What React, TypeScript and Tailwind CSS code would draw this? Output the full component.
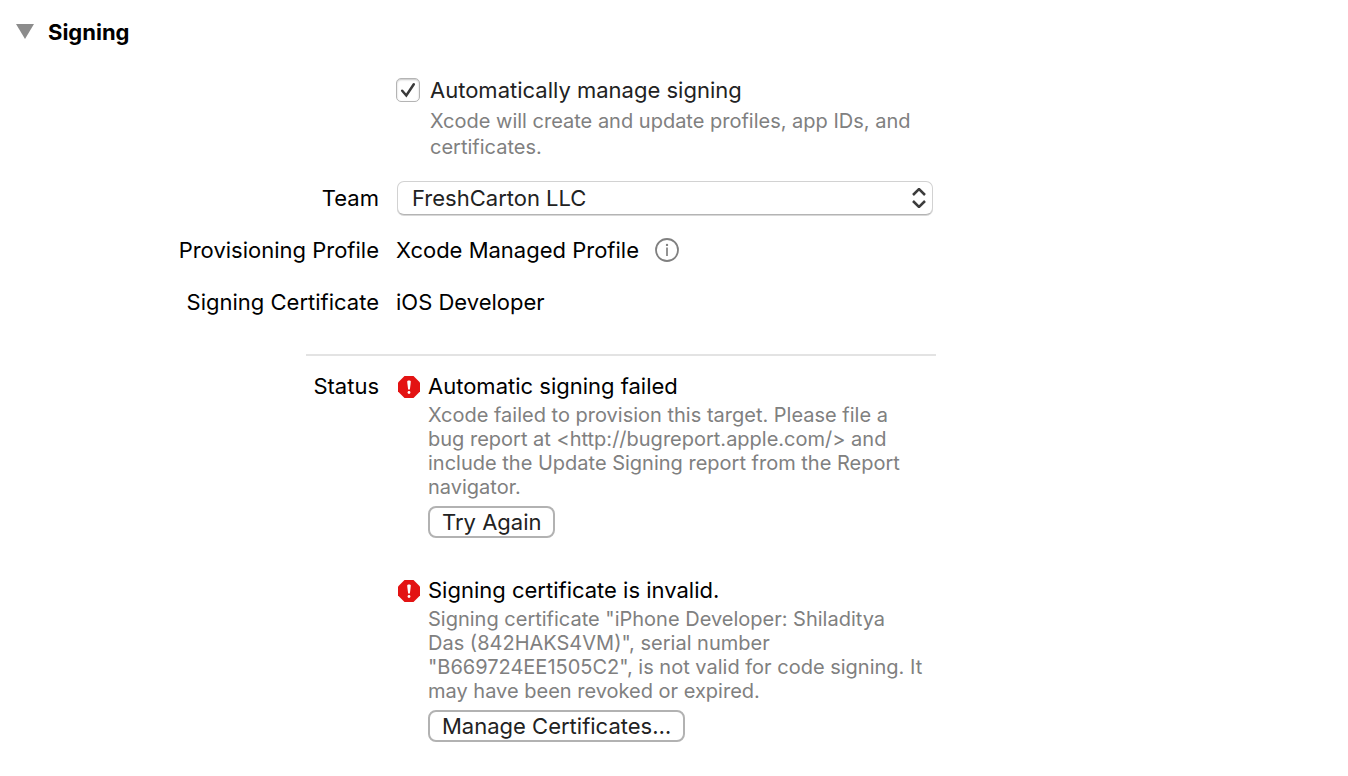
import { useState, type ReactNode } from "react";

function Row({ label, htmlFor, children }: { label?: string; htmlFor?: string; children: ReactNode }) {
  return (
    <div className="grid grid-cols-[379px_minmax(0,1fr)] gap-x-[17px]">
      <div className={htmlFor ? "self-center text-right leading-7" : "text-right leading-7"}>
        {label && (htmlFor ? <label htmlFor={htmlFor}>{label}</label> : <span>{label}</span>)}
      </div>
      <div>{children}</div>
    </div>
  );
}

function ErrorIcon() {
  return (
    <svg viewBox="0 -2 22 24" className="h-6 w-[22px] shrink-0" aria-hidden="true">
      <path d="M6.5 0h9L22 6.5v9L15.5 22h-9L0 15.5v-9Z" fill="#e31313" />
      <path d="M9.2 5.8c0-.9.7-1.400 1.800-1.400s1.800.5 1.800 1.400l-.9 7.700h-1.800Z" fill="#fff" />
      <circle cx="11" cy="16.500" r="1.400" fill="#fff" />
    </svg>
  );
}

function Issue({ title, lines, action }: { title: string; lines: string[]; action: string }) {
  return (
    <div>
      <div className="ml-[2px] flex items-center gap-2 leading-7">
        <ErrorIcon />
        <h3>{title}</h3>
      </div>
      <div className="pl-8">
        <p className="mt-[3px] text-[20px] leading-6 whitespace-nowrap text-[#808080]">
          {lines.map((line) => (
            <span key={line} className="block">{line}</span>
          ))}
        </p>
        <button
          type="button"
          className="mt-[7px] block h-8 rounded-lg border-2 border-[#b2b2b2] bg-white px-3 leading-7 whitespace-nowrap text-[#222]"
        >
          {action}
        </button>
      </div>
    </div>
  );
}

export default function App() {
  const [open, setOpen] = useState(true);
  const [auto, setAuto] = useState(true);

  return (
    <main className="min-h-screen bg-white pb-8 font-['Inter',sans-serif] text-[22px] text-black">
      <h2 className="pt-4 pl-4 text-[22px] leading-8 font-bold">
        <button type="button" aria-expanded={open} onClick={() => setOpen(!open)} className="flex items-center gap-[14px]">
          <svg viewBox="0 0 18 16" className={open ? "h-4 w-[18px]" : "h-4 w-[18px] -rotate-90"} aria-hidden="true">
            <path d="M0 0h18L9 15Z" fill="#8c8c8c" />
          </svg>
          Signing
        </button>
      </h2>

      {open && (
        <div>
          <div className="mt-7">
            <Row>
              <div className="flex items-center gap-[10px] leading-7">
                <span className="relative block h-6 w-6">
                  <input
                    id="auto-signing"
                    type="checkbox"
                    checked={auto}
                    onChange={() => setAuto(!auto)}
                    className="block h-6 w-6 appearance-none rounded-[5px] border border-[#b4b4b4] bg-white shadow-[inset_0_1px_2px_#c4c4c4]"
                  />
                  {auto && (
                    <svg viewBox="0 0 24 24" className="pointer-events-none absolute inset-0 h-6 w-6" aria-hidden="true">
                      <path d="M6.200 12.800l4.100 4.700L17.800 6.300" fill="none" stroke="#3a3a3a" strokeWidth="2.500" strokeLinecap="round" />
                    </svg>
                  )}
                </span>
                <label htmlFor="auto-signing" className="text-[#222]">Automatically manage signing</label>
              </div>
              <p className="mt-1 pl-[34px] text-[20px] leading-[26px] whitespace-nowrap text-[#808080]">
                Xcode will create and update profiles, app IDs, and
                <br />
                certificates.
              </p>
            </Row>
          </div>

          <div className="mt-[21px]">
            <Row label="Team" htmlFor="team">
              <div className="relative max-w-[537px] pl-px">
                <select
                  id="team"
                  className="block h-[34px] w-full appearance-none rounded-[7px] border border-[#d2d2d2] border-b-[#b4b4b4] bg-white pr-10 pl-[14px] text-[#222] shadow-[0_1px_0_#d8d8d8]"
                >
                  <option>FreshCarton LLC</option>
                </select>
                <svg viewBox="0 0 14 20" className="pointer-events-none absolute top-[7px] right-[7px] h-5 w-[14px]" aria-hidden="true">
                  <path d="M1 7l6-6 6 6M1 13l6 6 6-6" fill="none" stroke="#3c3c3c" strokeWidth="2.500" />
                </svg>
              </div>
            </Row>
          </div>

          <div className="mt-[21px]">
            <Row label="Provisioning Profile">
              <div className="flex items-center gap-4 leading-7">
                <span>Xcode Managed Profile</span>
                <button type="button" aria-label="Profile details">
                  <svg viewBox="0 0 24 24" className="block h-6 w-6" aria-hidden="true">
                    <circle cx="12" cy="12" r="11" fill="none" stroke="#808080" strokeWidth="1.800" />
                    <circle cx="12" cy="6.900" r="1.200" fill="#808080" />
                    <path d="M12 9.500v8.500" stroke="#808080" strokeWidth="1.700" />
                  </svg>
                </button>
              </div>
            </Row>
          </div>

          <div className="mt-6">
            <Row label="Signing Certificate">
              <span className="block leading-7">iOS Developer</span>
            </Row>
          </div>

          <hr className="mt-[38px] ml-[306px] max-w-[630px] border-t-2 border-[#e3e3e3]" />

          <div className="mt-4">
            <Row label="Status">
              <div className="flex flex-col gap-[38px]">
                <Issue
                  title="Automatic signing failed"
                  lines={[
                    "Xcode failed to provision this target. Please file a",
                    "bug report at <http://bugreport.apple.com/> and",
                    "include the Update Signing report from the Report",
                    "navigator.",
                  ]}
                  action="Try Again"
                />
                <Issue
                  title="Signing certificate is invalid."
                  lines={[
                    'Signing certificate "iPhone Developer: Shiladitya',
                    "Das (842HAKS4VM)\", serial number",
                    '"B669724EE1505C2", is not valid for code signing. It',
                    "may have been revoked or expired.",
                  ]}
                  action="Manage Certificates…"
                />
              </div>
            </Row>
          </div>
        </div>
      )}
    </main>
  );
}
